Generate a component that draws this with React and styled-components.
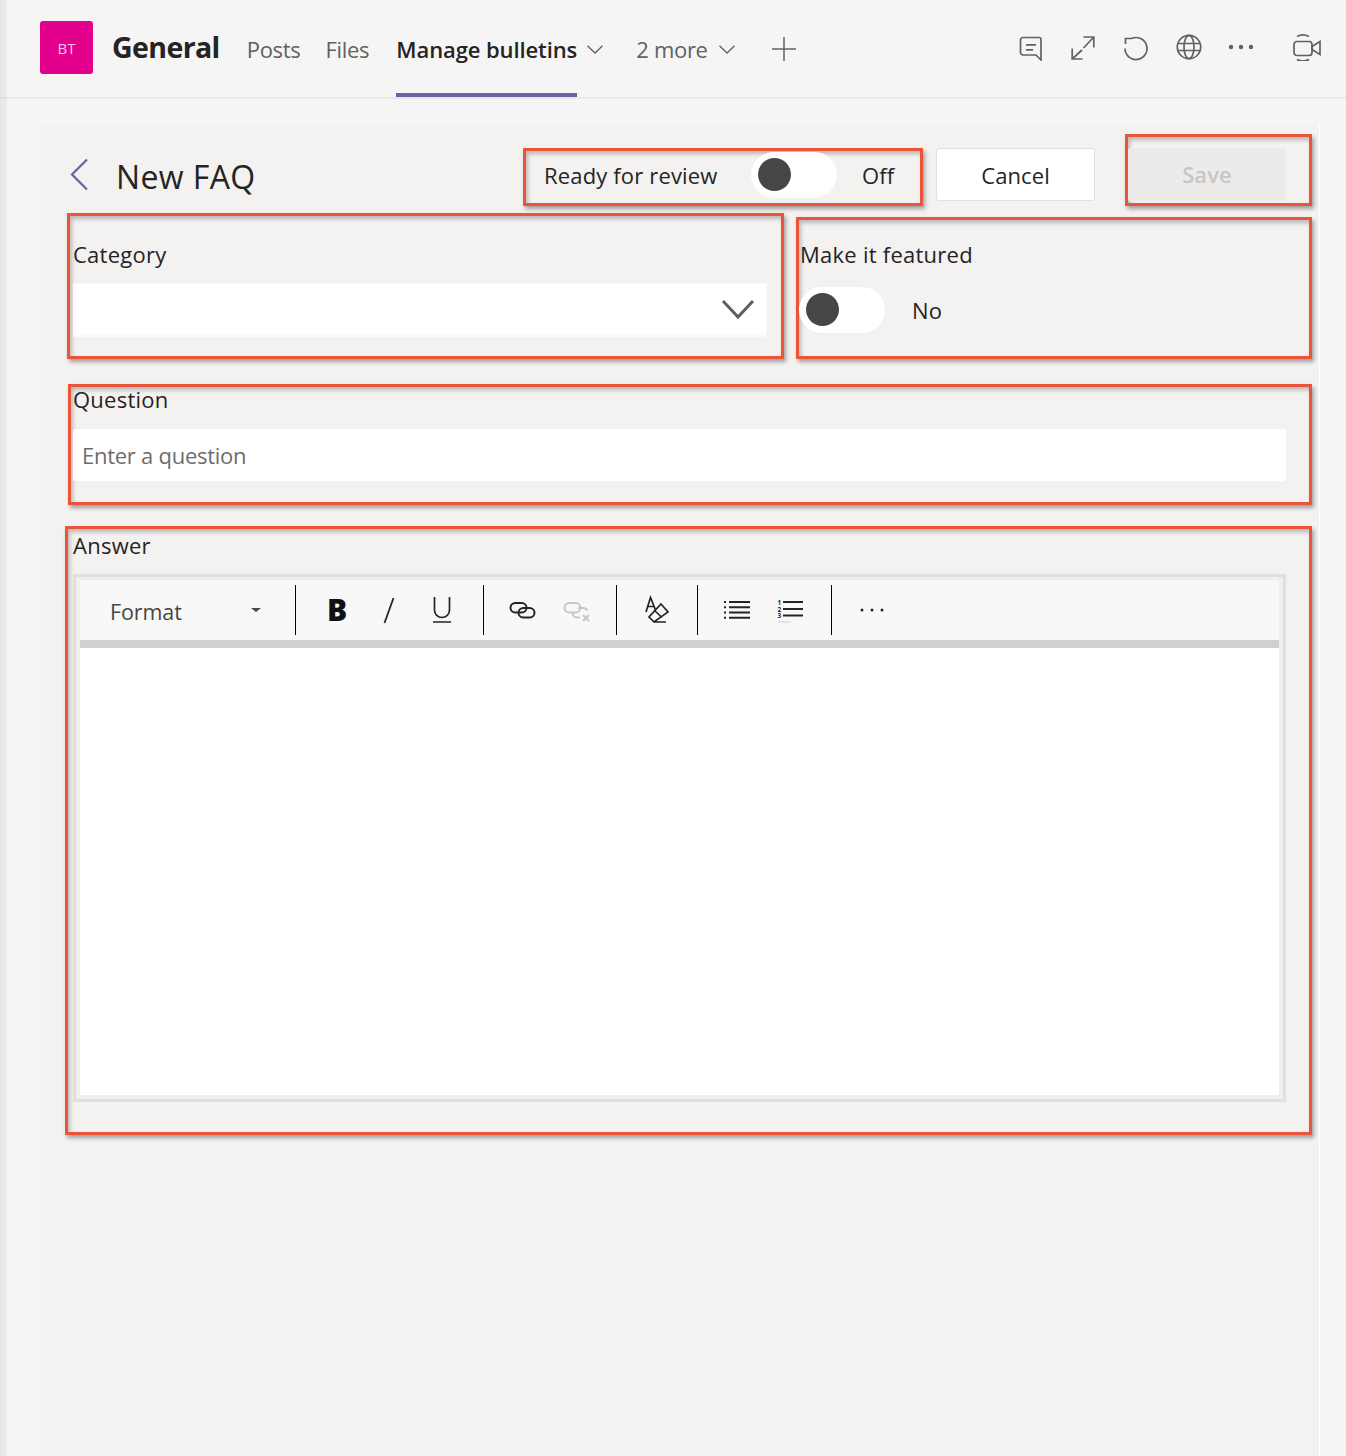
import React from "react";
import styled, { createGlobalStyle } from "styled-components";

const GlobalStyle = createGlobalStyle`
  * { box-sizing: border-box; }
  html, body { margin: 0; padding: 0; background: #f5f5f5; }
  body { font-family: "Open Sans", "Noto Sans", "Liberation Sans", sans-serif; color: #252423; }
`;

const Page = styled.div`
  width: 1346px;
  height: 1456px;
  overflow: hidden;
  padding-left: 7px;
  background: linear-gradient(90deg, #e6e6e6 0, #ececec 7px, #f5f5f5 7px);
`;

/* top bar */
const Header = styled.header`
  height: 99px;
  margin-left: -7px;
  padding: 0 25px 0 40px;
  display: flex;
  align-items: stretch;
  border-bottom: 2px solid rgba(0, 0, 0, 0.05);
`;

const Avatar = styled.div`
  width: 53px;
  height: 53px;
  margin-top: 21px;
  border-radius: 3px;
  background: #e3008c;
  color: #ffc6e8;
  font-size: 15px;
  display: flex;
  align-items: center;
  justify-content: center;
`;

const ChannelName = styled.div`
  margin: 0 27px 0 19px;
  padding-bottom: 3px;
  font-size: 28.5px;
  font-weight: 700;
  letter-spacing: -0.6px;
  color: #252423;
  display: flex;
  align-items: center;
`;

const Tab = styled.div`
  display: flex;
  align-items: center;
  height: 97px;
  padding-top: 4px;
  font-size: 22px;
  letter-spacing: ${(p) => (p.$active ? "-0.1px" : "-0.3px")};
  font-weight: ${(p) => (p.$active ? 600 : 400)};
  color: ${(p) => (p.$active ? "#252423" : "#616161")};
  margin-right: ${(p) => p.$gap || 0}px;
  border-bottom: 4px solid ${(p) => (p.$active ? "#6264a7" : "transparent")};
`;

const TabChevron = styled.svg`
  width: 16px;
  height: 9px;
  margin-left: ${(p) => p.$left}px;
  margin-right: ${(p) => p.$right}px;
  margin-top: 2px;
  align-self: center;
  fill: none;
  stroke: #616161;
  stroke-width: 1.3;
`;

const PlusIcon = styled.svg`
  width: 24px;
  height: 24px;
  align-self: center;
  stroke: #616161;
  stroke-width: 1.5;
  fill: none;
`;

const HeaderActions = styled.div`
  margin-left: auto;
  display: flex;
  align-items: center;
  gap: 26.7px;
  padding-bottom: 4px;
`;

const HeaderIcon = styled.svg`
  width: ${(p) => p.$w || 26}px;
  height: 28px;
  margin-left: ${(p) => p.$left || 0}px;
  fill: none;
  stroke: #616161;
  stroke-width: 1.7;
`;

/* form panel */
const Panel = styled.main`
  height: 1340px;
  margin: 26px 26px 0 33px;
  padding: 9px 7px 0 25px;
  background: #f3f2f1;
  border-right: 1px solid #fff;
`;

const RedBox = styled.div`
  border: 3px solid #ea5539;
  box-shadow: 2px 3px 4px rgba(0, 0, 0, 0.34), inset 2px 3px 4px rgba(0, 0, 0, 0.24);
`;

const TitleRow = styled.div`
  display: flex;
  align-items: flex-start;
  height: 72px;
`;

const BackIcon = styled.svg`
  width: 20px;
  height: 34px;
  margin: 24px 0 0 5px;
  flex: none;
  fill: none;
  stroke: #6264a7;
  stroke-width: 2.2;
`;

const Title = styled.h1`
  margin: 18px 0 0 26px;
  width: 407px;
  font-size: 32px;
  line-height: 50px;
  font-weight: 400;
  letter-spacing: 0.4px;
`;

const ReviewBox = styled(RedBox)`
  width: 400px;
  height: 58px;
  margin-top: 14px;
  padding: 0 0 4px 18px;
  display: flex;
  align-items: center;
`;

const Text = styled.span`
  font-size: 22px;
  letter-spacing: 0.16px;
  color: #252423;
  margin-left: ${(p) => p.$left || 0}px;
  width: ${(p) => (p.$width ? `${p.$width}px` : "auto")};
`;

const Toggle = styled.div`
  width: 86px;
  height: 46px;
  border-radius: 23px;
  background: #fff;
  padding: 6px 0 0 7px;
  flex: none;
`;

const Knob = styled.div`
  width: 33px;
  height: 33px;
  border-radius: 50%;
  background: #484644;
`;

const CancelButton = styled.button`
  width: 159px;
  height: 53px;
  margin: 14px 0 0 13px;
  background: #fff;
  border: 1px solid #e1dfdd;
  border-radius: 3px;
  font: 400 22px "Open Sans", sans-serif;
  letter-spacing: 0.1px;
  color: #252423;
`;

const SaveBox = styled(RedBox)`
  width: 187px;
  height: 72px;
  margin-left: 30px;
  padding-top: 11px;
`;

const SaveButton = styled.button`
  width: 158px;
  height: 53px;
  padding: 0 0 2px;
  background: #edebe9;
  border: none;
  border-radius: 3px;
  font: 600 22px "Open Sans", sans-serif;
  letter-spacing: 0.1px;
  color: #c8c6c4;
`;

const FieldsRow = styled.div`
  display: flex;
  align-items: flex-start;
  margin-top: 7px;
`;

const CategoryBox = styled(RedBox)`
  width: 717px;
  height: 146px;
  margin-left: 2px;
  padding: 24px 14px 0 3px;
`;

const FeaturedBox = styled(RedBox)`
  width: 516px;
  height: 142px;
  margin: 4px 0 0 12px;
  padding: 20px 0 0 1px;
`;

const Label = styled.div`
  font-size: 22px;
  line-height: 28px;
  letter-spacing: 0.25px;
  color: #252423;
`;

const SelectField = styled.div`
  height: 54px;
  margin-top: 15px;
  padding-right: 11px;
  background: #fff;
  border: solid #f9f9f9;
  border-width: 1px 1px 2px 2px;
  display: flex;
  align-items: center;
  justify-content: flex-end;
`;

const SelectChevron = styled.svg`
  width: 34px;
  height: 20px;
  margin-bottom: 1px;
  fill: none;
  stroke: #605e5c;
  stroke-width: 3;
`;

const ToggleRow = styled.div`
  display: flex;
  align-items: center;
  margin: 19px 0 0 -1px;
`;

const QuestionBox = styled(RedBox)`
  width: 1244px;
  height: 121px;
  margin: 25px 0 0 3px;
  padding: 0 23px 0 2px;
`;

const QuestionLabel = styled(Label)`
  margin-top: -2px;
`;

const TextInput = styled.div`
  height: 52px;
  margin-top: 16px;
  padding-left: 9px;
  background: #fff;
  border-radius: 3px;
  font-size: 22px;
  letter-spacing: -0.26px;
  color: #6e6c6b;
  display: flex;
  align-items: center;
`;

const AnswerBox = styled(RedBox)`
  width: 1247px;
  height: 609px;
  margin-top: 21px;
  padding: 2px 23px 0 5px;
`;

const Editor = styled.div`
  width: 1213px;
  height: 528px;
  margin-top: 15px;
  padding: 3px 4px 4px;
  border: 3px solid #e1dfdd;
  background: #f0efed;
`;

const EditorBody = styled.div`
  height: 100%;
  background: #fff;
`;

const Toolbar = styled.div`
  height: 60px;
  padding-left: 30px;
  background: #f8f8f8;
  display: flex;
  align-items: center;
`;

const ProgressBar = styled.div`
  height: 8px;
  background: #d0d0d0;
`;

const FormatLabel = styled.span`
  width: 141px;
  padding-top: 2px;
  font-size: 21.5px;
  letter-spacing: -0.1px;
  color: #484644;
`;

const Caret = styled.span`
  width: 0;
  height: 0;
  border: 5.5px solid transparent;
  border-top: 4px solid #484644;
  border-bottom: 0;
  margin-right: 34px;
`;

const Separator = styled.span`
  width: 1px;
  height: 50px;
  background: #000;
  flex: none;
  margin-right: ${(p) => p.$right}px;
`;

const BoldGlyph = styled.span`
  width: 18px;
  margin-right: 38px;
  font-size: 30px;
  line-height: 34px;
  font-weight: 800;
  color: #111;
`;

const ToolIcon = styled.svg`
  width: ${(p) => p.$w}px;
  height: 30px;
  flex: none;
  margin-right: ${(p) => p.$right}px;
  fill: none;
  stroke: ${(p) => p.$color || "#252423"};
  stroke-width: ${(p) => p.$sw || 2};
`;

const ListNumber = styled.text`
  font: 700 6.5px "Open Sans", sans-serif;
  fill: #252423;
  stroke: none;
`;

export default function App() {
  return (
    <Page>
      <GlobalStyle />
      <Header>
        <Avatar>BT</Avatar>
        <ChannelName>General</ChannelName>
        <Tab $gap={25}>Posts</Tab>
        <Tab $gap={27}>Files</Tab>
        <Tab $active>Manage bulletins</Tab>
        <TabChevron $left={10} $right={33} viewBox="0 0 16 9"><path d="M.5.8 8 8l7.500-7.200" /></TabChevron>
        <Tab>2 more</Tab>
        <TabChevron $left={11} $right={37} viewBox="0 0 16 9"><path d="M.5.8 8 8l7.500-7.200" /></TabChevron>
        <PlusIcon viewBox="0 0 24 24"><path d="M12 0v24M0 12h24" /></PlusIcon>
        <HeaderActions>
          <HeaderIcon viewBox="0 0 26 28">
            <path d="M5 4.500h16a2 2 0 0 1 2 2V27l-5-5H5a2.500 2.500 0 0 1-2.500-2.500V7A2.500 2.500 0 0 1 5 4.500z" />
            <path d="M8 11.800h10M8 16.800h7" />
          </HeaderIcon>
          <HeaderIcon viewBox="0 0 26 28">
            <path d="M13.500 15 23.800 4M13.500 4h10.300v10.500M12 17 2.200 26M2.200 15.500V26h10.300" />
          </HeaderIcon>
          <HeaderIcon viewBox="0 0 26 28">
            <path d="M8.500 5.500A11 11 0 1 1 2 15.500" />
            <path d="M9 5.500H2.500V11" />
          </HeaderIcon>
          <HeaderIcon viewBox="0 0 26 28">
            <circle cx="13" cy="14" r="11.700" />
            <ellipse cx="13" cy="14" rx="5" ry="11.700" />
            <path d="M2 10.500h22M2 17.500h22" />
          </HeaderIcon>
          <HeaderIcon viewBox="0 0 26 28">
            <g fill="#616161" stroke="none">
              <circle cx="3" cy="14" r="2.200" />
              <circle cx="13" cy="14" r="2.200" />
              <circle cx="23" cy="14" r="2.200" />
            </g>
          </HeaderIcon>
          <HeaderIcon $w={28} $left={12} viewBox="0 0 28 28">
            <rect x="1" y="8.500" width="18" height="14" rx="3" />
            <path d="M19 13.500l8-5v13l-8-5z" />
            <path d="M4 3.500a13 13 0 0 1 12 0M4 26.500a13 13 0 0 0 12 0" />
          </HeaderIcon>
        </HeaderActions>
      </Header>

      <Panel>
        <TitleRow>
          <BackIcon viewBox="0 0 20 34"><path d="M17 1.500 2 16.500l15 15" /></BackIcon>
          <Title>New FAQ</Title>
          <ReviewBox>
            <Text $width={207}>Ready for review</Text>
            <Toggle><Knob /></Toggle>
            <Text $left={25}>Off</Text>
          </ReviewBox>
          <CancelButton>Cancel</CancelButton>
          <SaveBox><SaveButton>Save</SaveButton></SaveBox>
        </TitleRow>

        <FieldsRow>
          <CategoryBox>
            <Label>Category</Label>
            <SelectField>
              <SelectChevron viewBox="0 0 34 20"><path d="M2 2l15 16L32 2" /></SelectChevron>
            </SelectField>
          </CategoryBox>
          <FeaturedBox>
            <Label>Make it featured</Label>
            <ToggleRow>
              <Toggle><Knob /></Toggle>
              <Text $left={27}>No</Text>
            </ToggleRow>
          </FeaturedBox>
        </FieldsRow>

        <QuestionBox>
          <QuestionLabel>Question</QuestionLabel>
          <TextInput>Enter a question</TextInput>
        </QuestionBox>

        <AnswerBox>
          <Label>Answer</Label>
          <Editor>
            <EditorBody>
              <Toolbar>
                <FormatLabel>Format</FormatLabel>
                <Caret />
                <Separator $right={31} />
                <BoldGlyph>B</BoldGlyph>
                <ToolIcon $w={12} $right={37} viewBox="0 0 12 30" $sw={1.8}><path d="M10.500 3 1.500 28" /></ToolIcon>
                <ToolIcon $w={20} $right={31} viewBox="0 0 20 30" $sw={1.7}>
                  <path d="M2.500 2v13a7.500 7.500 0 0 0 15 0V2M1 27h18" />
                </ToolIcon>
                <Separator $right={25} />
                <ToolIcon $w={27} $right={27} viewBox="0 0 27 30">
                  <rect x="1.500" y="8" width="16" height="9.500" rx="4.750" />
                  <rect x="9.500" y="13" width="16" height="9.500" rx="4.750" />
                </ToolIcon>
                <ToolIcon $w={27} $right={26} viewBox="0 0 27 30" $color="#c8c8c8">
                  <rect x="1.500" y="8" width="16" height="9.500" rx="4.750" />
                  <path d="M15 13h5.500a4.700 4.700 0 0 1 4 2.500M17 22.500h-3a4.750 4.750 0 0 1-4.500-4.500" />
                  <path d="M20 20l6 6M26 20l-6 6" />
                </ToolIcon>
                <Separator $right={28} />
                <ToolIcon $w={24} $right={28} viewBox="0 0 24 30" $sw={1.7}>
                  <path d="M1 17 5.500 2.500 10.500 15M3 11.500h5.500" />
                  <path d="M16 9l7 8-14 10-5-5zM9 15l8 7.500M9 27h12" />
                </ToolIcon>
                <Separator $right={25} />
                <ToolIcon $w={28} $right={26} viewBox="0 0 28 30">
                  <path d="M6 7h21M6 12.300h21M6 17.600h21M6 22.700h21" />
                  <path d="M1 7h2M1 12.300h2M1 17.600h2M1 22.700h2" />
                </ToolIcon>
                <ToolIcon $w={26} $right={28} viewBox="0 0 26 30">
                  <path d="M6 7h20M6 14h20M6 20.500h20" />
                  <ListNumber x="0.500" y="10">1</ListNumber>
                  <ListNumber x="0.500" y="16.500">2</ListNumber>
                  <ListNumber x="0.500" y="23">3</ListNumber>
                  <path d="M1 27h13" stroke="#d0d0d0" strokeWidth="1" />
                </ToolIcon>
                <Separator $right={28} />
                <ToolIcon $w={24} $right={0} viewBox="0 0 24 30" $color="none">
                  <g fill="#252423">
                    <circle cx="2" cy="15" r="1.500" />
                    <circle cx="12" cy="15" r="1.500" />
                    <circle cx="22" cy="15" r="1.500" />
                  </g>
                </ToolIcon>
              </Toolbar>
              <ProgressBar />
            </EditorBody>
          </Editor>
        </AnswerBox>
      </Panel>
    </Page>
  );
}
